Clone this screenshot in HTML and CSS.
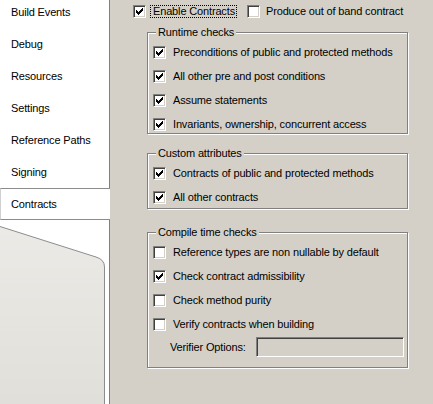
FILE: index.html
```
<!DOCTYPE html>
<html lang="en">
  <head>
    <meta charset="UTF-8" />
    <title>Contracts</title>
    <link rel="stylesheet" href="styles.css">
  </head>
  <body>
    <svg width="0" height="0" class="defs">
      <symbol id="check" viewBox="0 0 7 7">
        <path d="M6 0h1v1h-1z M5 1h2v1h-2z M0 2h1v1h-1z M4 2h3v1h-3z M0 3h2v1h-2z M3 3h3v1h-3z M0 4h5v1h-5z M1 5h3v1h-3z M2 6h1v1h-1z" />
      </symbol>
    </svg>

    <div class="window">
      <nav>
        <div class="tab first">Build Events</div>
        <div class="tab">Debug</div>
        <div class="tab">Resources</div>
        <div class="tab">Settings</div>
        <div class="tab">Reference Paths</div>
        <div class="tab">Signing</div>
        <div class="tab valgt">Contracts</div>
        <div class="tail">
          <svg width="109" height="184" viewBox="0 0 109 184">
            <defs>
              <linearGradient id="fade" x1="0" y1="0" x2="0" y2="1">
                <stop offset="0" stop-color="#ebeae6" />
                <stop offset="1" stop-color="#e1dfd9" />
              </linearGradient>
            </defs>
            <path d="M0 6.5 L96 37 Q104.5 39.5 104.5 47 V184 H0 Z" fill="url(#fade)" />
            <path d="M0 6.5 L96 37 Q104.5 39.5 104.5 47 V184" fill="none" stroke="#8c8c8c" />
          </svg>
        </div>
      </nav>

      <main>
        <div class="toprow">
          <span class="box"><svg><use href="#check" /></svg></span>
          <span class="focus">Enable Contracts</span>
          <span class="box gap"></span>
          <span class="text">Produce out of band contract</span>
        </div>

        <div class="group runtime">
          <span class="caption">Runtime checks</span>
          <div class="opt"><span class="box"><svg><use href="#check" /></svg></span>Preconditions of public and protected methods</div>
          <div class="opt"><span class="box"><svg><use href="#check" /></svg></span>All other pre and post conditions</div>
          <div class="opt"><span class="box"><svg><use href="#check" /></svg></span>Assume statements</div>
          <div class="opt"><span class="box"><svg><use href="#check" /></svg></span>Invariants, ownership, concurrent access</div>
        </div>

        <div class="group custom">
          <span class="caption">Custom attributes</span>
          <div class="opt"><span class="box"><svg><use href="#check" /></svg></span>Contracts of public and protected methods</div>
          <div class="opt"><span class="box"><svg><use href="#check" /></svg></span>All other contracts</div>
        </div>

        <div class="group compile">
          <span class="caption">Compile time checks</span>
          <div class="opt"><span class="box"></span>Reference types are non nullable by default</div>
          <div class="opt"><span class="box"><svg><use href="#check" /></svg></span>Check contract admissibility</div>
          <div class="opt"><span class="box"></span>Check method purity</div>
          <div class="opt"><span class="box"></span>Verify contracts when building</div>
          <div class="verifier">
            <span class="lbl">Verifier Options:</span>
            <span class="field"></span>
          </div>
        </div>
      </main>
    </div>
  </body>
</html>
```

FILE: styles.css
```
* {
  box-sizing: border-box;
}

body {
  margin: 0;
  overflow: hidden;
  font-family: "Liberation Sans", Arial, sans-serif;
  font-size: 11px;
  letter-spacing: -0.15px;
  color: #000;
}

.defs {
  position: absolute;
}

.window {
  display: flex;
  height: 404px;
}

/* venstre faner */
nav {
  width: 110px;
  flex: none;
  display: flex;
  flex-direction: column;
  background-color: #fff;
  border-right: 1px solid #808080;
}

.tab {
  height: 32px;
  flex: none;
  display: flex;
  align-items: center;
  padding-left: 11px;
  line-height: 13px;
}

.first {
  margin-top: -4px;
}

.valgt {
  margin-right: -1px;
  padding-left: 10px;
  background-color: #fff;
  border-top: 1px solid #8c8c8c;
  border-bottom: 1px solid #8c8c8c;
  border-left: 1px solid #cfcfcf;
}

.tail {
  flex: 1;
}

.tail svg {
  display: block;
}

/* indstillinger */
main {
  flex: 1;
  background-color: #d4d0c8;
  padding: 5px 0 0 23px;
}

.toprow {
  display: flex;
  align-items: center;
  height: 13px;
  line-height: 11px;
}

.focus {
  margin-left: 4px;
  padding: 0 1px 0 2px;
  border: 1px dotted #000;
}

.gap {
  margin-left: 10px;
}

.text {
  margin-left: 6px;
}

.box {
  width: 13px;
  height: 13px;
  flex: none;
  display: flex;
  align-items: center;
  justify-content: center;
  background-color: #fff;
  border: 1px solid;
  border-color: #808080 #fff #fff #808080;
  box-shadow: inset 1px 1px #404040, inset -1px -1px #d4d0c8;
}

.box svg {
  width: 7px;
  height: 7px;
  fill: #000;
  shape-rendering: crispEdges;
}

.group {
  width: 261px;
  margin-left: 14px;
  display: flex;
  flex-direction: column;
  gap: 11px;
  padding: 0 0 2px 5px;
  border: 1px solid #808080;
  box-shadow: inset 1px 1px #fff, 1px 1px #fff;
}

.runtime {
  margin-top: 14px;
}

.custom {
  margin-top: 19px;
  padding-bottom: 4px;
}

.compile {
  margin-top: 23px;
  padding-bottom: 10px;
}

.caption {
  align-self: flex-start;
  margin: -7px 0 -4px 3px;
  padding: 0 2px;
  line-height: 13px;
  background-color: #d4d0c8;
}

.opt {
  display: flex;
  align-items: center;
  gap: 7px;
  height: 13px;
  line-height: 13px;
}

.verifier {
  display: flex;
  align-items: center;
  height: 20px;
  margin-top: -5px;
  padding-left: 17px;
}

.lbl {
  width: 86px;
}

.field {
  width: 148px;
  height: 20px;
  border: 1px solid;
  border-color: #808080 #fff #fff #808080;
  box-shadow: inset 1px 1px #404040, inset -1px -1px #d4d0c8;
  background-color: #d4d0c8;
}
```
